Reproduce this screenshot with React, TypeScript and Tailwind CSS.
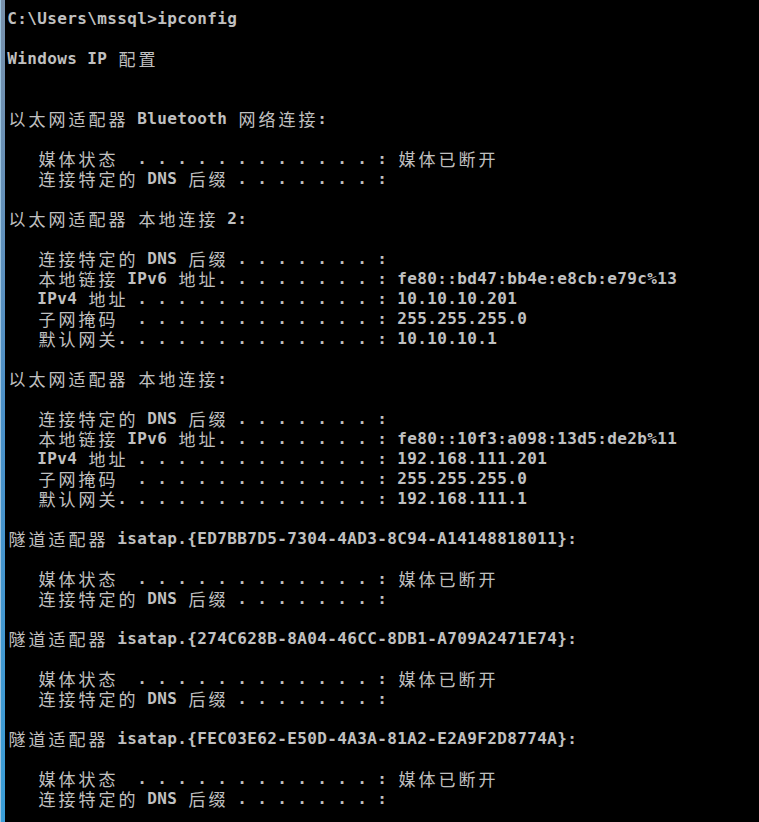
const dots = (n: number) => '. '.repeat(n)
const field = (label: string, n: number, value = '') => label + dots(n) + ': ' + value

const media = field('   媒体状态  ', 12, '媒体已断开')
const dns = field('   连接特定的 DNS 后缀 ', 7)
const ipv6 = (v: string) => field('   本地链接 IPv6 地址', 8, v)
const ipv4 = (v: string) => field('   IPv4 地址 ', 12, v)
const mask = (v: string) => field('   子网掩码  ', 12, v)
const gateway = (v: string) => field('   默认网关', 13, v)

const lines: string[] = [
    'C:\\Users\\mssql>ipconfig',
    '',
    'Windows IP 配置',
    '',
    '',
    '以太网适配器 Bluetooth 网络连接:',
    '',
    media,
    dns,
    '',
    '以太网适配器 本地连接 2:',
    '',
    dns,
    ipv6('fe80::bd47:bb4e:e8cb:e79c%13'),
    ipv4('10.10.10.201'),
    mask('255.255.255.0'),
    gateway('10.10.10.1'),
    '',
    '以太网适配器 本地连接:',
    '',
    dns,
    ipv6('fe80::10f3:a098:13d5:de2b%11'),
    ipv4('192.168.111.201'),
    mask('255.255.255.0'),
    gateway('192.168.111.1'),
    '',
    '隧道适配器 isatap.{ED7BB7D5-7304-4AD3-8C94-A14148818011}:',
    '',
    media,
    dns,
    '',
    '隧道适配器 isatap.{274C628B-8A04-46CC-8DB1-A709A2471E74}:',
    '',
    media,
    dns,
    '',
    '隧道适配器 isatap.{FEC03E62-E50D-4A3A-81A2-E2A9F2D8774A}:',
    '',
    media,
    dns,
]

const isWide = (ch: string) => /[\u2e80-\u9fff\uff00-\uffef]/.test(ch)

// console grid: ascii = 10px cell, cjk = 20px cell
function ConsoleLine({ text }: { text: string }) {
    return (
        <div className="flex h-[20px] items-start whitespace-pre">
            {Array.from(text).map((ch, i) =>
                isWide(ch) ? (
                    <span
                        key={i}
                        className="w-[20px] h-[20px] shrink-0 text-center font-['Noto_Sans_CJK_SC',sans-serif] text-[17px] leading-[20px]"
                    >
                        {ch}
                    </span>
                ) : (
                    <span
                        key={i}
                        className="w-[10px] h-[20px] shrink-0 text-center font-['DejaVu_Sans_Mono',monospace] text-[16px] font-bold leading-[20px]"
                    >
                        {ch}
                    </span>
                )
            )}
        </div>
    )
}

export default function App() {
    return (
        <div className="flex min-h-screen h-[822px] bg-black overflow-hidden">
            {/* window edge */}
            <div className="w-[5px] shrink-0 bg-gradient-to-b from-[#7890aa] via-[#4a90c8] to-[#3a9ed8] border-l border-[#9cc4e0]" />
            <div className="flex-1 pl-[2px] pt-[9px] text-[#c0c0c0]">
                {lines.map((line, i) => (
                    <ConsoleLine key={i} text={line} />
                ))}
            </div>
        </div>
    )
}
